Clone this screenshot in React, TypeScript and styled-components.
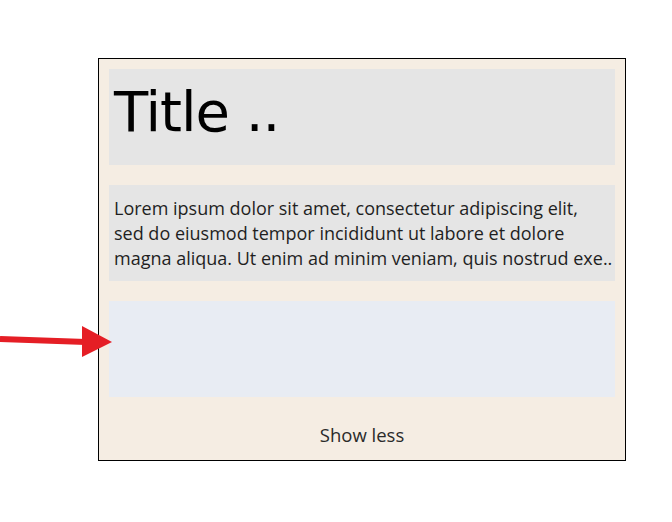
import React from 'react'
import styled, { createGlobalStyle } from 'styled-components'

const GlobalStyle = createGlobalStyle`
  body {
    margin: 0;
    background: #ffffff;
    font-family: 'Open Sans', 'Noto Sans', sans-serif;
  }
`

const Page = styled.div`
  position: relative;
  width: 672px;
  height: 522px;
  padding: 58px 0 0 98px;
  box-sizing: border-box;
`

const Card = styled.div`
  width: 528px;
  height: 403px;
  box-sizing: border-box;
  border: 1px solid #000000;
  background: #f5ede3;
  padding: 10px 10px 0 10px;
  display: flex;
  flex-direction: column;
  gap: 20px;
`

const Block = styled.div<{ tone: 'gray' | 'blue' }>`
  height: 96px;
  flex-shrink: 0;
  box-sizing: border-box;
  background: ${props => (props.tone === 'gray' ? '#e5e5e5' : '#e8ecf3')};
  overflow: hidden;
`

const Title = styled.h1`
  margin: 0;
  padding: 7px 5px 0;
  font-family: 'DejaVu Sans', sans-serif;
  font-weight: normal;
  font-size: 56px;
  line-height: 72px;
  letter-spacing: -1px;
  color: #000000;
`

const Paragraph = styled.p`
  margin: 0;
  padding: 11px 5px 0;
  font-size: 18px;
  line-height: 25px;
  color: #1f1f1f;
  white-space: nowrap;
`

const ShowLess = styled.button`
  align-self: center;
  margin-top: 5px;
  border: none;
  background: none;
  padding: 0;
  font-family: 'Open Sans', 'Noto Sans', sans-serif;
  font-size: 18.5px;
  color: #2a2a2a;
  cursor: pointer;
`

const Arrow = styled.svg`
  position: absolute;
  left: 0;
  top: 320px;
`

export default function App() {
  return (
    <Page>
      <GlobalStyle />
      <Card>
        <Block tone="gray">
          <Title>Title ..</Title>
        </Block>
        <Block tone="gray">
          <Paragraph>
            Lorem ipsum dolor sit amet, consectetur adipiscing elit,
            <br />
            sed do eiusmod tempor incididunt ut labore et dolore
            <br />
            magna aliqua. Ut enim ad minim veniam, quis nostrud exe..
          </Paragraph>
        </Block>
        <Block tone="blue" />
        <ShowLess>Show less</ShowLess>
      </Card>
      <Arrow width="120" height="45" viewBox="0 0 120 45">
        <line x1="0" y1="19" x2="86" y2="22" stroke="#e51e25" strokeWidth="6" />
        <polygon points="82,6 112,22 82,37" fill="#e51e25" />
      </Arrow>
    </Page>
  )
}
